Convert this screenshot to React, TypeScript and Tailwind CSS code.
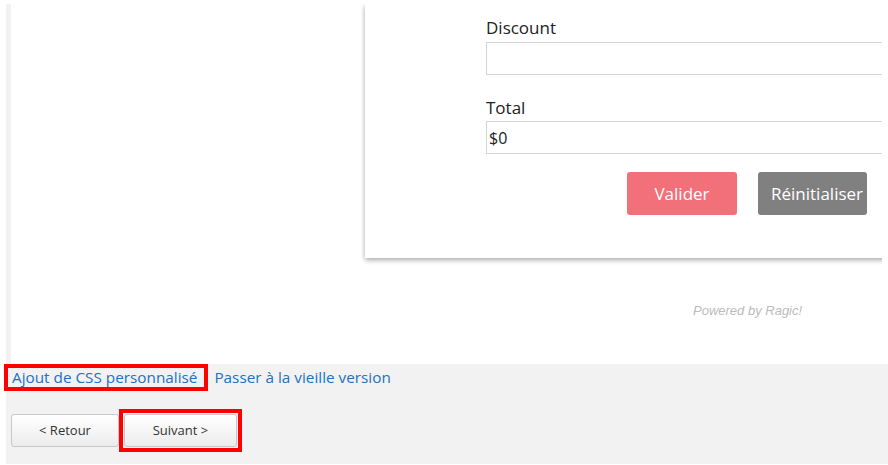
export default function App() {
  return (
    <div className="w-[888px] h-[465px] overflow-hidden bg-white pt-[4px] pl-[6px] pb-px font-['Open_Sans',sans-serif]">
      <div className="h-full bg-[#f2f2f2]">
        {/* form area */}
        <div className="ml-[5px] h-[360px] bg-white">
          <div className="ml-[350px] w-[521px] overflow-hidden pl-[4px] pb-[8px]">
            <div className="w-[700px] bg-white pt-[12px] pb-[43px] pl-[121px] shadow-[0_2px_5px_rgba(0,0,0,0.35)]">
              <label className="block text-[17px] leading-[24px] text-[#222]">Discount</label>
              <input
                className="mt-[2px] block h-[33px] w-[460px] border border-[#d6d6d6] px-[3px] text-[16px] text-[#222] outline-none"
                defaultValue=""
              />
              <label className="mt-[21px] block text-[17px] leading-[24px] text-[#222]">Total</label>
              <input
                className="mt-[1px] block h-[33px] w-[460px] border border-[#d6d6d6] px-[2px] text-[16px] text-[#222] outline-none"
                defaultValue="$0"
              />
              <div className="mt-[18px] ml-[141px] flex gap-[21px]">
                <button className="h-[43px] w-[110px] rounded-[3px] bg-[#f2707a] text-center text-[17px] text-white">
                  Valider
                </button>
                <button className="h-[43px] w-[109px] whitespace-nowrap rounded-[3px] bg-[#808080] pl-[13px] text-left text-[17px] text-white">
                  Réinitialiser
                </button>
              </div>
            </div>
          </div>
          <div className="mt-[37px] pl-[682px] font-['Liberation_Sans',Arial,sans-serif] text-[13px] italic leading-[15px] text-[#bbbbbb]">
            Powered by Ragic!
          </div>
        </div>

        {/* links */}
        <div className="ml-[-2px] flex items-center text-[15.3px] leading-[19px]">
          <span className="border-4 border-[#ff0000] pl-[4px] pr-[7px]">
            <a className="text-[#2270c5]">Ajout de CSS personnalisé</a>
          </span>
          <a className="ml-[6px] text-[#2270c5]">Passer à la vieille version</a>
        </div>

        {/* navigation */}
        <div className="mt-[18px] ml-[5px] flex items-start">
          <button className="mt-[5px] h-[33px] w-[108px] rounded-[3px] border border-[#c8c8c8] bg-gradient-to-b from-white to-[#ececec] text-[13px] text-[#333]">
            &lt; Retour
          </button>
          <span className="border-4 border-[#ff0000] p-px">
            <button className="block h-[33px] w-[113px] rounded-[3px] border border-[#c8c8c8] bg-gradient-to-b from-white to-[#ececec] text-[13px] text-[#333]">
              Suivant &gt;
            </button>
          </span>
        </div>
      </div>
    </div>
  );
}
